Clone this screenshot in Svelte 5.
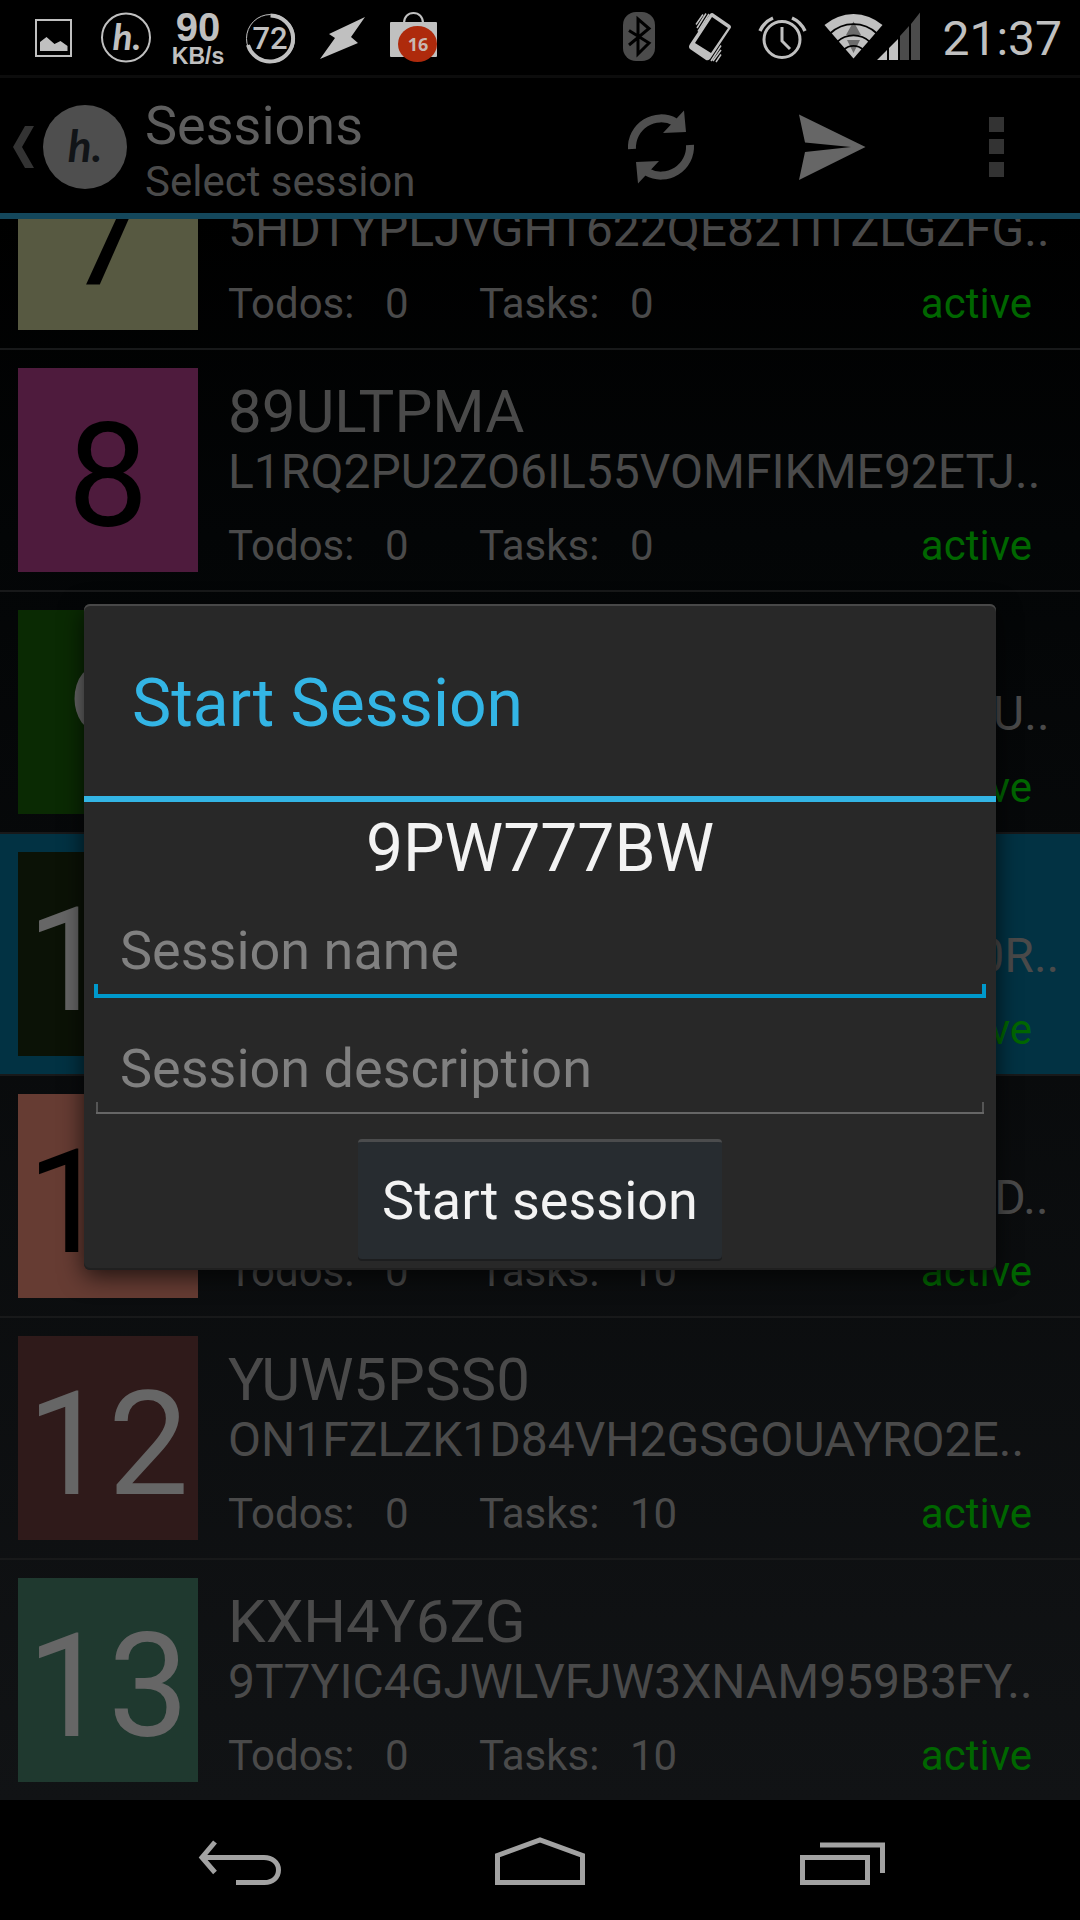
<script>
  const sessions = [
    { n: 7, name: '7QK2MZTR', code: '5HDTYPLJVGHT622QE82TITZLGZFG..', tasks: 0, tile: '#575941', ink: '#000' },
    { n: 8, name: '89ULTPMA', code: 'L1RQ2PU2ZO6IL55VOMFIKME92ETJ..', tasks: 0, tile: '#4e1b3d', ink: '#000' },
    { n: 9, name: 'H3VXA0LE', code: 'G5RDTYPLJVGHT622QE82TITZLGZU..', tasks: 0, tile: '#0a2a03', ink: '#666' },
    { n: 10, name: '9PW777BW', code: 'L1RQ2PU2ZO6IL55VOMOIKMO92E0R..', tasks: 10, tile: '#0b1206', ink: '#666', selected: true },
    { n: 11, name: 'B6RNC4WD', code: 'L1RQ2PU2ZO6IL55VOMFIKME92ETD..', tasks: 10, tile: '#663c33', ink: '#000' },
    { n: 12, name: 'YUW5PSS0', code: 'ON1FZLZK1D84VH2GSGOUAYRO2E..', tasks: 10, tile: '#2f1a1a', ink: '#666' },
    { n: 13, name: 'KXH4Y6ZG', code: '9T7YIC4GJWLVFJW3XNAM959B3FY..', tasks: 10, tile: '#1f392f', ink: '#666' }
  ];
  let name = $state('');
  let description = $state('');
</script>

<div class="screen">
  <div class="status">
    <div class="notes">
      <svg viewBox="18 0 72 75" class="slot" aria-hidden="true">
        <rect x="36" y="20" width="35" height="36" fill="none" stroke="#c0c0c0" stroke-width="2" />
        <path d="M40 51V42l6.500-5 8 7 6-3 7 5v5z" fill="#c0c0c0" />
      </svg>
      <svg viewBox="90 0 72 75" class="slot" aria-hidden="true">
        <circle cx="126" cy="37.500" r="24" fill="none" stroke="#c0c0c0" stroke-width="2" />
        <text x="127" y="50" class="script" font-size="37" fill="#c0c0c0">h.</text>
      </svg>
      <svg viewBox="162 0 72 75" class="slot" aria-hidden="true">
        <text x="198" y="41" class="sans" font-size="40" fill="#c0c0c0">90</text>
        <text x="198" y="64" class="sans" font-size="23" fill="#c0c0c0">KB/s</text>
      </svg>
      <svg viewBox="234 0 72 75" class="slot" aria-hidden="true">
        <circle cx="270.500" cy="38.500" r="24" fill="none" stroke="#c0c0c0" stroke-width="1" />
        <path d="M270.500 15.500A23 23 0 1 1 248 45" fill="none" stroke="#c0c0c0" stroke-width="4" />
        <text x="270" y="49" class="medium" font-size="31" fill="#c0c0c0">72</text>
      </svg>
      <svg viewBox="306 0 72 75" class="slot" aria-hidden="true">
        <path d="M365 17 329 34l6 4-15 21 38-16-7-6z" fill="#c0c0c0" />
      </svg>
      <svg viewBox="378 0 72 75" class="slot" aria-hidden="true">
        <path d="M404 23c0-6 4-10 9.500-10s9.500 4 9.500 10" fill="none" stroke="#c0c0c0" stroke-width="2" />
        <rect x="390" y="22" width="47" height="35" rx="1" fill="#c0c0c0" />
        <ellipse cx="417.500" cy="44" rx="19.500" ry="18" fill="#ae2a0c" />
        <text x="418" y="51" class="badge" font-size="18" fill="#c8b8b0">16</text>
      </svg>
    </div>
    <div class="system">
      <svg viewBox="603 0 72 75" class="slot" aria-hidden="true">
        <rect x="623" y="12" width="32" height="49" rx="13" fill="#4b4b4b" />
        <path d="M629 30.500 649 43 638 54V19l11 9.500L629 45" fill="none" stroke="#000" stroke-width="3" />
      </svg>
      <svg viewBox="675 0 72 75" class="slot" aria-hidden="true">
        <path fill-rule="evenodd" fill="#c0c0c0" d="M710 14q2-2 4 0l16 11q2 2 0 4l-20 30q-2 2-4 1l-16-11q-2-2 0-5zM712 17 695 43l16 10 17-25z" />
        <path d="M703 14.500 696 24.500M706 13.500 697 28M709 14 698 31.500M721 45.500 711 61M721 50 713 61M721 54.500 716 62" stroke="#c0c0c0" stroke-width="1.500" />
      </svg>
      <svg viewBox="747 0 72 75" class="slot" aria-hidden="true">
        <g fill="none" stroke="#c0c0c0">
          <circle cx="782" cy="39.500" r="18" stroke-width="3" />
          <path d="M760 31q4-9 13-13M805 31q-4-9-13-13" stroke-width="3.500" />
          <path d="M782 27v14l8 8" stroke-width="3" />
        </g>
      </svg>
      <svg viewBox="819 0 104 75" class="wide" aria-hidden="true">
        <path d="M853.500 58.500 824.500 25a44 44 0 0 1 58 0z" fill="#c0c0c0" />
        <path d="M853.500 21.500 861 35h-15zM847 40h13l-6.500 13z" fill="#6c6c6c" />
        <g fill="none" stroke="#000" stroke-width="1.800">
          <path d="M830 33.500a34 34 0 0 1 47 0M837 42a24 24 0 0 1 33 0M844 49.500a14 14 0 0 1 19 0" />
        </g>
        <path d="M877 60l10-10v10zM889 60V48l9-9v21z" fill="#c0c0c0" />
        <path d="M900 60V36l9-10v34zM911 60V24l9-11.500V60z" fill="#4b4b4b" />
      </svg>
      <time>21:37</time>
    </div>
  </div>

  <header>
    <button class="home" aria-label="Navigate up">
      <svg viewBox="0 75 145 135" aria-hidden="true">
        <path d="M25 123h9L22 144l12 21h-9L13 144z" fill="#333" />
        <circle cx="85" cy="144" r="42" fill="#4e4e4e" />
        <text x="85" y="159" class="script" font-size="44" fill="#111417">h.</text>
      </svg>
    </button>
    <div class="heading">
      <h1>Sessions</h1>
      <p>Select session</p>
    </div>
    <button class="action" aria-label="Refresh">
      <svg viewBox="576 78 168 135" aria-hidden="true">
        <g fill="none" stroke="#4f4f4f" stroke-width="8">
          <path d="M632 149a29 29 0 0 1 43-27" />
          <path d="M690 145a29 29 0 0 1-43 27" />
        </g>
        <path d="M684 110.500 686 132l-23 1zM638 183.500 636 162l23-1z" fill="#4f4f4f" />
      </svg>
    </button>
    <button class="action" aria-label="Send">
      <svg viewBox="744 78 168 135" aria-hidden="true">
        <path d="M799 114.500 865.500 147 799 180l6-28 46-5-46-4.500z" fill="#666" />
      </svg>
    </button>
    <button class="action" aria-label="More options">
      <svg viewBox="912 78 168 135" aria-hidden="true">
        <path d="M989 117h15v15h-15zM989 139h15v15h-15zM989 162h15v15h-15z" fill="#333" />
      </svg>
    </button>
  </header>

  <ul class="list">
    {#each sessions as s (s.n)}
      <li class:selected={s.selected}>
        <div class="tile" style:background={s.tile} style:color={s.ink}>{s.n}</div>
        <div class="info">
          <div class="name">{s.name}</div>
          <div class="code">{s.code}</div>
          <div class="stats">
            <span class="label todos">Todos:</span><span class="count">0</span>
            <span class="label">Tasks:</span><span class="count">{s.tasks}</span>
            <span class="state">active</span>
          </div>
        </div>
      </li>
    {/each}
  </ul>

  <nav>
    <button aria-label="Back">
      <svg viewBox="90 1800 300 120" aria-hidden="true">
        <path d="M215 1842 202 1857.500 215 1872.500" fill="none" stroke="#a2a2a2" stroke-width="5" />
        <path d="M203 1857.500H264c8 0 14.500 5 14.500 12.500s-6 12.500-14 12.500H236" fill="none" stroke="#a2a2a2" stroke-width="5" />
      </svg>
    </button>
    <button aria-label="Home">
      <svg viewBox="390 1800 300 120" aria-hidden="true">
        <path d="M497.500 1882.500V1855.500L540 1840l42.500 15.500v27z" fill="none" stroke="#a2a2a2" stroke-width="5" />
      </svg>
    </button>
    <button aria-label="Recent apps">
      <svg viewBox="690 1800 300 120" aria-hidden="true">
        <path d="M802.500 1857.500h65v25h-65zM820 1845h62.500v28" fill="none" stroke="#a2a2a2" stroke-width="5" />
      </svg>
    </button>
  </nav>

  <div class="overlay">
    <form class="dialog" role="dialog" aria-labelledby="dialog-title" onsubmit={(e) => e.preventDefault()}>
      <h2 id="dialog-title">Start Session</h2>
      <p class="key">9PW777BW</p>
      <input class="active-field" type="text" aria-label="Session name" placeholder="Session name" bind:value={name} />
      <input class="idle-field" type="text" aria-label="Session description" placeholder="Session description" bind:value={description} />
      <button class="submit" type="submit">Start session</button>
    </form>
  </div>
</div>

<style>
  :global(body) {
    margin: 0;
    background: #000;
  }
  .screen {
    position: relative;
    display: flex;
    flex-direction: column;
    height: 100vh;
    overflow: hidden;
    background: #000;
    color: #4a4a4a;
    font-family: Roboto, sans-serif;
  }
  h1, h2, p, ul {
    margin: 0;
    padding: 0;
    font-weight: 400;
  }
  button {
    margin: 0;
    padding: 0;
    border: 0;
    background: none;
    font: inherit;
  }
  svg {
    display: block;
  }
  svg text {
    text-anchor: middle;
  }
  .script {
    font-family: Lato, sans-serif;
    font-style: italic;
    font-weight: 700;
  }
  .sans {
    font-family: "Liberation Sans", sans-serif;
    font-weight: 700;
  }
  .medium {
    font-family: Roboto, sans-serif;
    font-weight: 500;
  }
  .badge {
    font-family: "Open Sans", sans-serif;
    font-weight: 700;
  }

  .status {
    display: flex;
    justify-content: space-between;
    height: 75px;
    flex: none;
    padding: 0 18px;
  }
  .notes, .system {
    display: flex;
  }
  .slot {
    width: 72px;
    height: 75px;
  }
  .wide {
    width: 104px;
    height: 75px;
  }
  time {
    margin-left: 19px;
    color: #c0c0c0;
    font-size: 48px;
    line-height: 78px;
  }

  header {
    display: flex;
    flex: none;
    height: 135px;
    border-top: 3px solid #0c0c0c;
    border-bottom: 6px solid #14475b;
  }
  .home svg {
    width: 145px;
    height: 135px;
  }
  .heading {
    flex: 1;
    padding-top: 16px;
  }
  h1 {
    color: #5e5e5e;
    font-size: 54px;
    line-height: 64px;
  }
  .heading p {
    font-size: 42px;
    line-height: 48px;
  }
  .action svg {
    width: 168px;
    height: 135px;
  }

  .list {
    flex: 1;
    min-height: 0;
    display: flex;
    flex-direction: column;
    justify-content: flex-end;
    overflow: hidden;
    list-style: none;
    background: linear-gradient(#000, #030506 20%, #111315);
  }
  li {
    display: flex;
    flex: none;
    gap: 30px;
    height: 240px;
    border-bottom: 2px solid #18191a;
  }
  li:last-child {
    border-bottom: 0;
  }
  .selected {
    background: #023243;
  }
  .tile {
    box-sizing: border-box;
    flex: none;
    width: 180px;
    height: 204px;
    margin: 18px 0 18px 18px;
    padding-top: 14px;
    font-size: 144px;
    line-height: 190px;
    text-align: center;
  }
  .info {
    flex: 1;
    min-width: 0;
    padding-top: 28px;
    white-space: nowrap;
  }
  .name {
    font-size: 60px;
    line-height: 68px;
  }
  .code {
    font-size: 48px;
    line-height: 52px;
  }
  .stats {
    display: flex;
    margin-top: 24px;
    padding-right: 48px;
    font-size: 42px;
    line-height: 48px;
  }
  .label {
    width: 151px;
  }
  .count {
    width: 94px;
  }
  .todos {
    width: 157px;
  }
  .state {
    margin-left: auto;
    color: #060;
  }

  nav {
    display: flex;
    flex: none;
    justify-content: center;
    height: 120px;
  }
  nav svg {
    width: 300px;
    height: 120px;
  }

  .overlay {
    position: absolute;
    inset: 75px 0 120px;
    display: flex;
    align-items: center;
    padding: 0 84px 1px;
  }
  .dialog {
    box-sizing: border-box;
    display: flex;
    flex: 1;
    flex-direction: column;
    min-width: 0;
    padding-bottom: 11px;
    border-radius: 6px;
    background: #282828;
    box-shadow: inset 0 2px 0 #484848, inset 0 -2px 0 #202020, 0 6px 24px rgba(0, 0, 0, 0.7);
  }
  h2 {
    padding: 8px 48px 0;
    border-bottom: 6px solid #33b5e5;
    color: #33b5e5;
    font-size: 66px;
    line-height: 184px;
  }
  .key {
    color: #f3f3f3;
    font-size: 66px;
    line-height: 94px;
    text-align: center;
  }
  input {
    box-sizing: border-box;
    height: 102px;
    margin: 0 10px;
    padding: 14px 26px 8px;
    border: 0;
    outline: 0;
    border-radius: 0;
    background-color: transparent;
    background-repeat: no-repeat;
    color: #f3f3f3;
    font: 54px Roboto, sans-serif;
  }
  input::placeholder {
    color: #808080;
    opacity: 1;
  }
  .active-field {
    background-image: linear-gradient(#0099cc, #0099cc), linear-gradient(#0099cc, #0099cc), linear-gradient(#0099cc, #0099cc);
    background-position: left bottom, left bottom, right bottom;
    background-size: 100% 4px, 4px 14px, 4px 14px;
  }
  .idle-field {
    margin: 16px 12px 0;
    padding: 14px 24px 8px;
    background-image: linear-gradient(#666, #666), linear-gradient(#555, #555), linear-gradient(#555, #555);
    background-position: left bottom 2px, left bottom 2px, right bottom 2px;
    background-size: 100% 2px, 2px 12px, 2px 12px;
  }
  .submit {
    box-sizing: border-box;
    align-self: center;
    height: 120px;
    margin-top: 23px;
    padding: 0 24px;
    border-top: 3px solid #4b4c4d;
    border-radius: 4px;
    background: #272c30;
    box-shadow: 0 2px 0 #1c1d1e;
    color: #f3f3f3;
    font-size: 54px;
  }
</style>
